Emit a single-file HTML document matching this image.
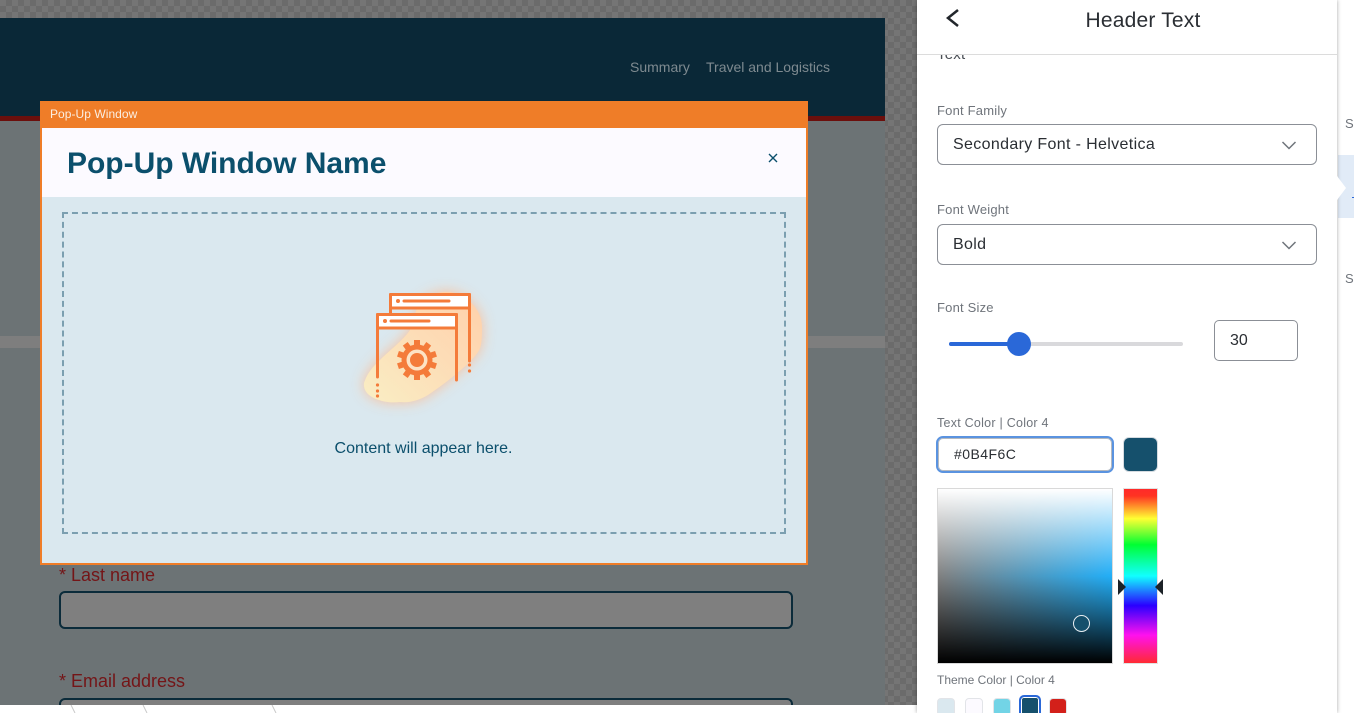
<!DOCTYPE html>
<html><head><meta charset="utf-8"><style>
*{box-sizing:border-box}
html,body{margin:0;padding:0;width:1354px;height:713px;overflow:hidden;background:#fff}
#w{width:1354px;height:713px;position:relative;overflow:hidden;background:#fff;font-family:"Liberation Sans",sans-serif}
.a{position:absolute}
.t{position:absolute;white-space:nowrap;line-height:1}
.lab{color:#6f747b;font-size:13px;letter-spacing:.2px}
.sel{position:absolute;left:937px;width:380px;height:41px;border:1px solid #8b8f96;border-radius:6px;background:#fff;color:#2a2e33;font-size:16px;line-height:40px;padding-left:15px;letter-spacing:.35px}
.sw{position:absolute;top:698px;width:18px;height:18px;border-radius:4px;border:1px solid #e2e4e8}
</style></head><body><div id="w">
<div class="a" style="left:0;top:0;width:917px;height:705px;background-color:#757575;background-image:linear-gradient(45deg,#6b6b6b 25%,transparent 25%,transparent 75%,#6b6b6b 75%),linear-gradient(45deg,#6b6b6b 25%,transparent 25%,transparent 75%,#6b6b6b 75%);background-size:12px 12px;background-position:0 0,6px 6px"></div>
<div class="a" style="left:0;top:18px;width:885px;height:98px;background:#0a2837"></div>
<div class="a" style="left:0;top:116px;width:885px;height:5px;background:#6b0f0c"></div>
<div class="a" style="left:0;top:121px;width:885px;height:584px;background:#6c7375"></div>
<div class="a" style="left:0;top:336px;width:885px;height:12px;background:#7e7e7e"></div>
<div class="t" style="left:630px;top:60px;font-size:14px;color:#7e8a90">Summary</div>
<div class="t" style="left:706px;top:60px;font-size:14px;color:#7e8a90">Travel and Logistics</div>
<div class="t" style="left:59px;top:566px;font-size:18px;color:#741517">* Last name</div>
<div class="a" style="left:59px;top:591px;width:734px;height:38px;border:2px solid #0b2b3a;border-radius:6px;background:#7f7f7f"></div>
<div class="t" style="left:59px;top:672px;font-size:18px;color:#741517">* Email address</div>
<div class="a" style="left:59px;top:698px;width:734px;height:20px;border:2px solid #0b2b3a;border-radius:6px;background:#7f7f7f"></div>
<div class="a" style="left:0;top:705px;width:917px;height:8px;background:#fff"></div>
<svg class="a" style="left:0;top:705px" width="300" height="8"><path d="M71 0l4 8M143 0l4 8M272 0l4 8" stroke="#c9c9c9" fill="none"/></svg>

<div class="a" style="left:40px;top:101px;width:768px;height:464px;background:#ef7d28"></div>
<div class="a" style="left:42px;top:128px;width:764px;height:69px;background:#fcfaff"></div>
<div class="a" style="left:42px;top:197px;width:764px;height:366px;background:#dae8ef"></div>
<div class="t" style="left:50px;top:108px;font-size:12px;letter-spacing:.05px;color:#fbeee2">Pop-Up Window</div>
<div class="t" style="left:67px;top:149px;font-size:30px;font-weight:bold;color:#0b4f6c;letter-spacing:-.02px">Pop-Up Window Name</div>
<svg class="a" style="left:767px;top:152px" width="12" height="12"><path d="M2 2l8 8M10 2l-8 8" stroke="#0b4f6c" stroke-width="1.400" fill="none"/></svg>
<div class="a" style="left:62px;top:212px;width:724px;height:322px;border:2px dashed #7b9fb0"></div>

<svg class="a" style="left:340px;top:270px" width="170" height="150" viewBox="0 0 170 150">
<defs><filter id="b" x="-30%" y="-30%" width="160%" height="160%"><feGaussianBlur stdDeviation="7"/></filter>
<linearGradient id="g" x1="0" y1="1" x2="1" y2="0"><stop offset="0" stop-color="#f9eec4"/><stop offset=".55" stop-color="#fddcb6"/><stop offset="1" stop-color="#ffd0aa"/></linearGradient></defs>
<path d="M24 113C28 100 38 92 43 87C55 76 65 68 70 60C76 48 74 38 82 31C90 24 100 21 110 22C125 24 142 38 142 57C142 72 141 78 138 82C131 92 123 98 115 105C105 113 97 119 88 125C78 131 68 133 60 132C45 134 22 128 24 113Z" fill="#ffb98c" opacity=".85" filter="url(#b)"/>
<path d="M24 113C28 100 38 92 43 87C55 76 65 68 70 60C76 48 74 38 82 31C90 24 100 21 110 22C125 24 142 38 142 57C142 72 141 78 138 82C131 92 123 98 115 105C105 113 97 119 88 125C78 131 68 133 60 132C45 134 22 128 24 113Z" fill="url(#g)"/>
<g fill="none" stroke="#f47b3a" stroke-width="3" stroke-linecap="round" stroke-linejoin="round">
<path d="M50.500 44V24.500H129.500V91"/>
<rect x="50.500" y="24.500" width="79" height="13.500" fill="#fff"/>
<path d="M37.500 107V44.500H116.500V110"/>
<rect x="37.500" y="44.500" width="79" height="13.500" fill="#fff"/>
<path d="M64 31H109M51 51H89"/>
</g>
<g fill="#f47b3a">
<circle cx="58" cy="31" r="2"/><circle cx="45" cy="51" r="2"/>
<circle cx="77" cy="90" r="15.500"/>
<rect x="74" y="70" width="6" height="8"/><rect x="74" y="70" width="6" height="8" transform="rotate(36 77 90)"/><rect x="74" y="70" width="6" height="8" transform="rotate(72 77 90)"/><rect x="74" y="70" width="6" height="8" transform="rotate(108 77 90)"/><rect x="74" y="70" width="6" height="8" transform="rotate(144 77 90)"/><rect x="74" y="70" width="6" height="8" transform="rotate(180 77 90)"/><rect x="74" y="70" width="6" height="8" transform="rotate(216 77 90)"/><rect x="74" y="70" width="6" height="8" transform="rotate(252 77 90)"/><rect x="74" y="70" width="6" height="8" transform="rotate(288 77 90)"/><rect x="74" y="70" width="6" height="8" transform="rotate(324 77 90)"/>
<circle cx="77" cy="90" r="10.500" fill="#fde2c4"/>
<circle cx="77" cy="90" r="7"/>
<circle cx="37.500" cy="115" r="1.600"/><circle cx="37.500" cy="121" r="1.600"/><circle cx="37.500" cy="126" r="1.600"/><circle cx="129.500" cy="95" r="1.600"/><circle cx="129.500" cy="101" r="1.600"/></g>
</svg>
<div class="t" style="left:0;top:441px;width:847px;text-align:center;font-size:16px;color:#0b4f6c">Content will appear here.</div>

<div class="a" style="left:1337px;top:0;width:17px;height:713px;background:#fff"></div>
<div class="a" style="left:1338px;top:155px;width:16px;height:63px;background:#e1ebf7"></div>
<div class="a" style="left:1352px;top:197px;width:2px;height:1px;background:#2a68d8"></div>
<div class="t" style="left:1345px;top:117px;font-size:13px;color:#6f747b">S</div>
<div class="t" style="left:1345px;top:272px;font-size:13px;color:#6f747b">S</div>
<div class="a" style="left:917px;top:0;width:420px;height:713px;background:#fff;box-shadow:0 0 4px rgba(0,0,0,.35)"></div>
<svg class="a" style="left:1337px;top:172px" width="10" height="32"><path d="M0 4L9 16L0 28Z" fill="#fff"/></svg>
<div class="t lab" style="left:937px;top:47px;color:#4a4f55;font-size:15px">Text</div>
<div class="a" style="left:917px;top:0;width:420px;height:55px;background:#fff;border-bottom:1px solid #dcdcdc"></div>
<svg class="a" style="left:945px;top:8px" width="16" height="20"><path d="M13 2L3 10L13 18" stroke="#22262b" stroke-width="2.500" fill="none"/></svg>
<div class="t" style="left:917px;top:10px;width:452px;text-align:center;font-size:21px;color:#2a2e33;letter-spacing:.2px">Header Text</div>

<div class="t lab" style="left:937px;top:104px">Font Family</div>
<div class="sel" style="top:124px">Secondary Font - Helvetica</div>
<svg class="a" style="left:1281px;top:140px" width="16" height="12"><path d="M1.500 2L8 8.500L14.500 2" stroke="#6f747b" stroke-width="1.500" fill="none"/></svg>
<div class="t lab" style="left:937px;top:203px">Font Weight</div>
<div class="sel" style="top:224px">Bold</div>
<svg class="a" style="left:1281px;top:240px" width="16" height="12"><path d="M1.500 2L8 8.500L14.500 2" stroke="#6f747b" stroke-width="1.500" fill="none"/></svg>

<div class="t lab" style="left:937px;top:301px">Font Size</div>
<div class="a" style="left:949px;top:342px;width:234px;height:4px;border-radius:2px;background:#d9d9dc"></div>
<div class="a" style="left:949px;top:342px;width:70px;height:4px;border-radius:2px;background:#2a68d8"></div>
<div class="a" style="left:1007px;top:332px;width:24px;height:24px;border-radius:50%;background:#2a68d8"></div>
<div class="a" style="left:1214px;top:320px;width:84px;height:41px;border:1px solid #8b8f96;border-radius:5px;color:#2a2e33;font-size:16px;line-height:40px;padding-left:15px">30</div>

<div class="t lab" style="left:937px;top:417px;font-size:12.500px;letter-spacing:.25px">Text Color | Color 4</div>
<div class="a" style="left:936px;top:436px;width:178px;height:37px;border:2px solid #5a93e0;box-shadow:inset 0 0 0 1px #b4b9c0;border-radius:7px;background:#fff;color:#2a2e33;font-size:14px;line-height:33px;padding-left:16px;letter-spacing:.45px">#0B4F6C</div>
<div class="a" style="left:1123px;top:437px;width:35px;height:35px;border-radius:6px;background:#15506c;border:1px solid #d5dbe0"></div>

<div class="a" style="left:937px;top:488px;width:176px;height:176px;border:1px solid #d9d9d9;background:linear-gradient(to top,#000,rgba(0,0,0,0) 50%),linear-gradient(to bottom,#fff,rgba(255,255,255,0) 50%),linear-gradient(to right,#808080,#22aef7)"></div>
<div class="a" style="left:1073px;top:615px;width:17px;height:17px;border:1.500px solid #e8eef2;border-radius:50%;background:#15506c"></div>
<div class="a" style="left:1123px;top:488px;width:35px;height:176px;border:1px solid #e2e2e2;background:linear-gradient(to bottom,#ff2a2a 0%,#ff3322 4%,#ffff33 17%,#00ff33 32%,#11ffff 50%,#2a00ff 67%,#ff11ee 84%,#ff2a33 100%)"></div>
<svg class="a" style="left:1118px;top:579px" width="46" height="16"><path d="M0 0L8 8L0 16ZM45 0L37 8L45 16Z" fill="#1c2228"/></svg>

<div class="t lab" style="left:937px;top:674px;font-size:12px;letter-spacing:0">Theme Color | Color 4</div>
<div class="sw" style="left:937px;background:#dae8ef"></div>
<div class="sw" style="left:965px;background:#fcfaff"></div>
<div class="sw" style="left:993px;background:#72d4e6"></div>
<div class="a" style="left:1019px;top:695px;width:22px;height:24px;border-radius:5px;background:#15506c;border:2px solid #2a68d8;box-shadow:inset 0 0 0 1px #fff"></div>
<div class="sw" style="left:1049px;background:#d3201a"></div>
</div></body></html>
